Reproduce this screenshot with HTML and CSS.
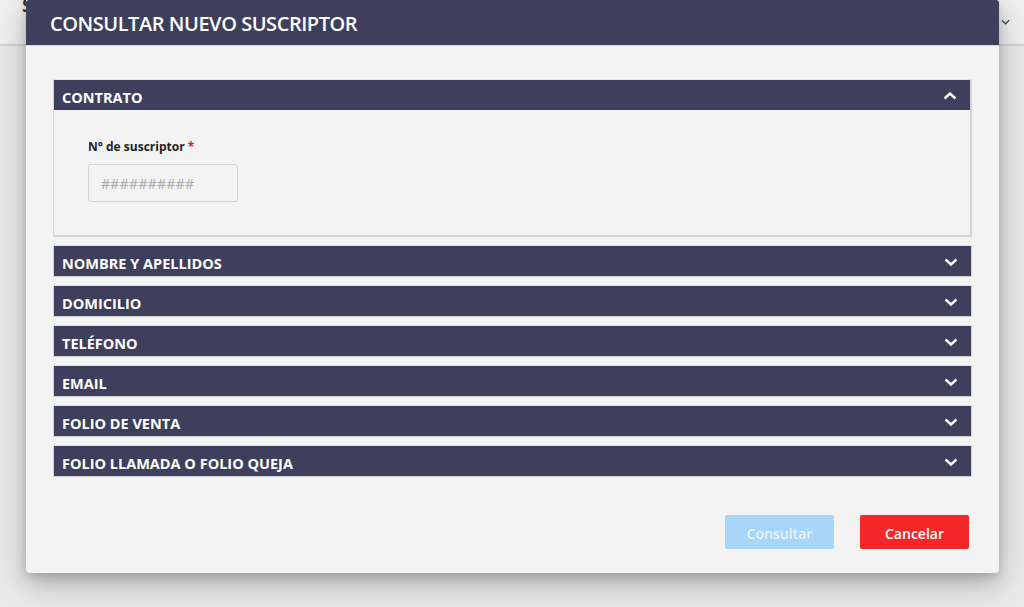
FILE: index.html
```html
<!DOCTYPE html>
<html lang="es">
<head>
<meta charset="utf-8">
<title>Consultar nuevo suscriptor</title>
<link rel="stylesheet" href="styles.css">
</head>
<body>
<div class="topbar">
  <span class="topbar-text">S</span>
  <svg class="topbar-chevron" viewBox="0 0 10 6" width="9" height="6"><path d="M1 1l4 4 4-4" fill="none" stroke="#3a4a6a" stroke-width="1.4"/></svg>
</div>
<div class="page"></div>

<div class="modal">
  <div class="modal-header">CONSULTAR NUEVO SUSCRIPTOR</div>
  <div class="modal-body">
    <div class="section open">
      <div class="section-head">
        <span>CONTRATO</span>
        <svg class="chev" viewBox="0 0 14 8" width="14" height="8"><path d="M1.5 6.5l5.5-5 5.5 5" fill="none" stroke="#fff" stroke-width="2.4"/></svg>
      </div>
      <div class="section-body">
        <label class="field-label">N° de suscriptor <span class="req">*</span></label>
        <input class="field-input" type="text" placeholder="##########">
      </div>
    </div>
    <div class="section">
      <div class="section-head"><span>NOMBRE Y APELLIDOS</span><svg class="chev" viewBox="0 0 14 8" width="14" height="8"><path d="M1.5 1.5l5.5 5 5.5-5" fill="none" stroke="#fff" stroke-width="2.4"/></svg></div>
    </div>
    <div class="section">
      <div class="section-head"><span>DOMICILIO</span><svg class="chev" viewBox="0 0 14 8" width="14" height="8"><path d="M1.5 1.5l5.5 5 5.5-5" fill="none" stroke="#fff" stroke-width="2.4"/></svg></div>
    </div>
    <div class="section">
      <div class="section-head"><span>TELÉFONO</span><svg class="chev" viewBox="0 0 14 8" width="14" height="8"><path d="M1.5 1.5l5.5 5 5.5-5" fill="none" stroke="#fff" stroke-width="2.4"/></svg></div>
    </div>
    <div class="section">
      <div class="section-head"><span>EMAIL</span><svg class="chev" viewBox="0 0 14 8" width="14" height="8"><path d="M1.5 1.5l5.5 5 5.5-5" fill="none" stroke="#fff" stroke-width="2.4"/></svg></div>
    </div>
    <div class="section">
      <div class="section-head"><span>FOLIO DE VENTA</span><svg class="chev" viewBox="0 0 14 8" width="14" height="8"><path d="M1.5 1.5l5.5 5 5.5-5" fill="none" stroke="#fff" stroke-width="2.4"/></svg></div>
    </div>
    <div class="section">
      <div class="section-head"><span>FOLIO LLAMADA O FOLIO QUEJA</span><svg class="chev" viewBox="0 0 14 8" width="14" height="8"><path d="M1.5 1.5l5.5 5 5.5-5" fill="none" stroke="#fff" stroke-width="2.4"/></svg></div>
    </div>
  </div>
  <div class="modal-footer">
    <button class="btn btn-primary" disabled>Consultar</button>
    <button class="btn btn-danger">Cancelar</button>
  </div>
</div>
</body>
</html>
```
FILE: styles.css
```css
* { box-sizing: border-box; }
html, body { margin: 0; padding: 0; }
body {
  width: 1024px;
  height: 607px;
  overflow: hidden;
  background: #e9e9e9;
  font-family: "Open Sans", "Noto Sans", "Liberation Sans", sans-serif;
  position: relative;
}
.topbar {
  height: 46px;
  background: #efefef;
  border-bottom: 2px solid #d2d2d2;
  display: flex;
  align-items: flex-start;
  justify-content: space-between;
  padding: 0 14px 0 22px;
}
.topbar-text {
  font-size: 18px;
  font-weight: 700;
  color: #333;
  line-height: 18px;
  margin-top: -4px;
}
.topbar-chevron { margin-top: 19px; }
.page { height: 561px; }

.modal {
  position: absolute;
  left: 26px;
  top: 0;
  width: 973px;
  height: 573px;
  background: #f3f3f3;
  border-radius: 0 0 4px 4px;
  box-shadow: 0 10px 28px rgba(0,0,0,0.28), 0 4px 10px rgba(0,0,0,0.12);
  display: flex;
  flex-direction: column;
}
.modal-header {
  height: 46px;
  background: #3d3f5c;
  color: #fff;
  font-size: 20px;
  font-weight: 600;
  letter-spacing: -0.45px;
  padding: 11px 0 0 24px;
  line-height: 26px;
  border-radius: 3px 3px 0 0;
  border-bottom: 1px solid #d8d8d8;
}
.modal-body {
  padding: 33px 27px 0 27px;
  display: flex;
  flex-direction: column;
  gap: 8px;
}
.section {
  border: 1px solid #d3d3d3;
  border-top-color: #e4e4e4;
}
.section-head {
  height: 30px;
  background: #3d3f5c;
  color: #fff;
  font-size: 14.5px;
  font-weight: 700;
  display: flex;
  align-items: center;
  justify-content: space-between;
  padding: 0 13px 0 8px;
}
.section-head span { margin-top: 4px; }
.section-head .chev { margin-top: 1px; }
.section-body {
  height: 125px;
  padding: 29px 34px 0;
  display: flex;
  flex-direction: column;
  align-items: flex-start;
  gap: 9px;
}
.section.open { border-width: 1px 2px 2px 1px; }
.field-label {
  font-size: 12px;
  font-weight: 700;
  color: #222;
  line-height: 16px;
}
.req { color: #e02020; }
.field-input {
  width: 150px;
  height: 38px;
  border: 1px solid #d2d2d2;
  border-radius: 3px;
  background: #f3f3f3;
  padding: 0 12px;
  font-family: inherit;
  font-size: 14px;
  color: #333;
}
.field-input::placeholder { color: #a8a8a8; letter-spacing: 0.3px; }
.modal-footer {
  margin-top: auto;
  padding: 0 30px 24px 0;
  display: flex;
  justify-content: flex-end;
  gap: 26px;
}
.btn {
  width: 109px;
  height: 34px;
  border: none;
  border-radius: 2px;
  padding: 3px 0 0;
  font-family: inherit;
  font-size: 14px;
  font-weight: 600;
  color: #fff;
}
.btn-primary { background: #a7d6f8; color: #e9f3fb; }
.btn-danger { background: #f42828; }
```
